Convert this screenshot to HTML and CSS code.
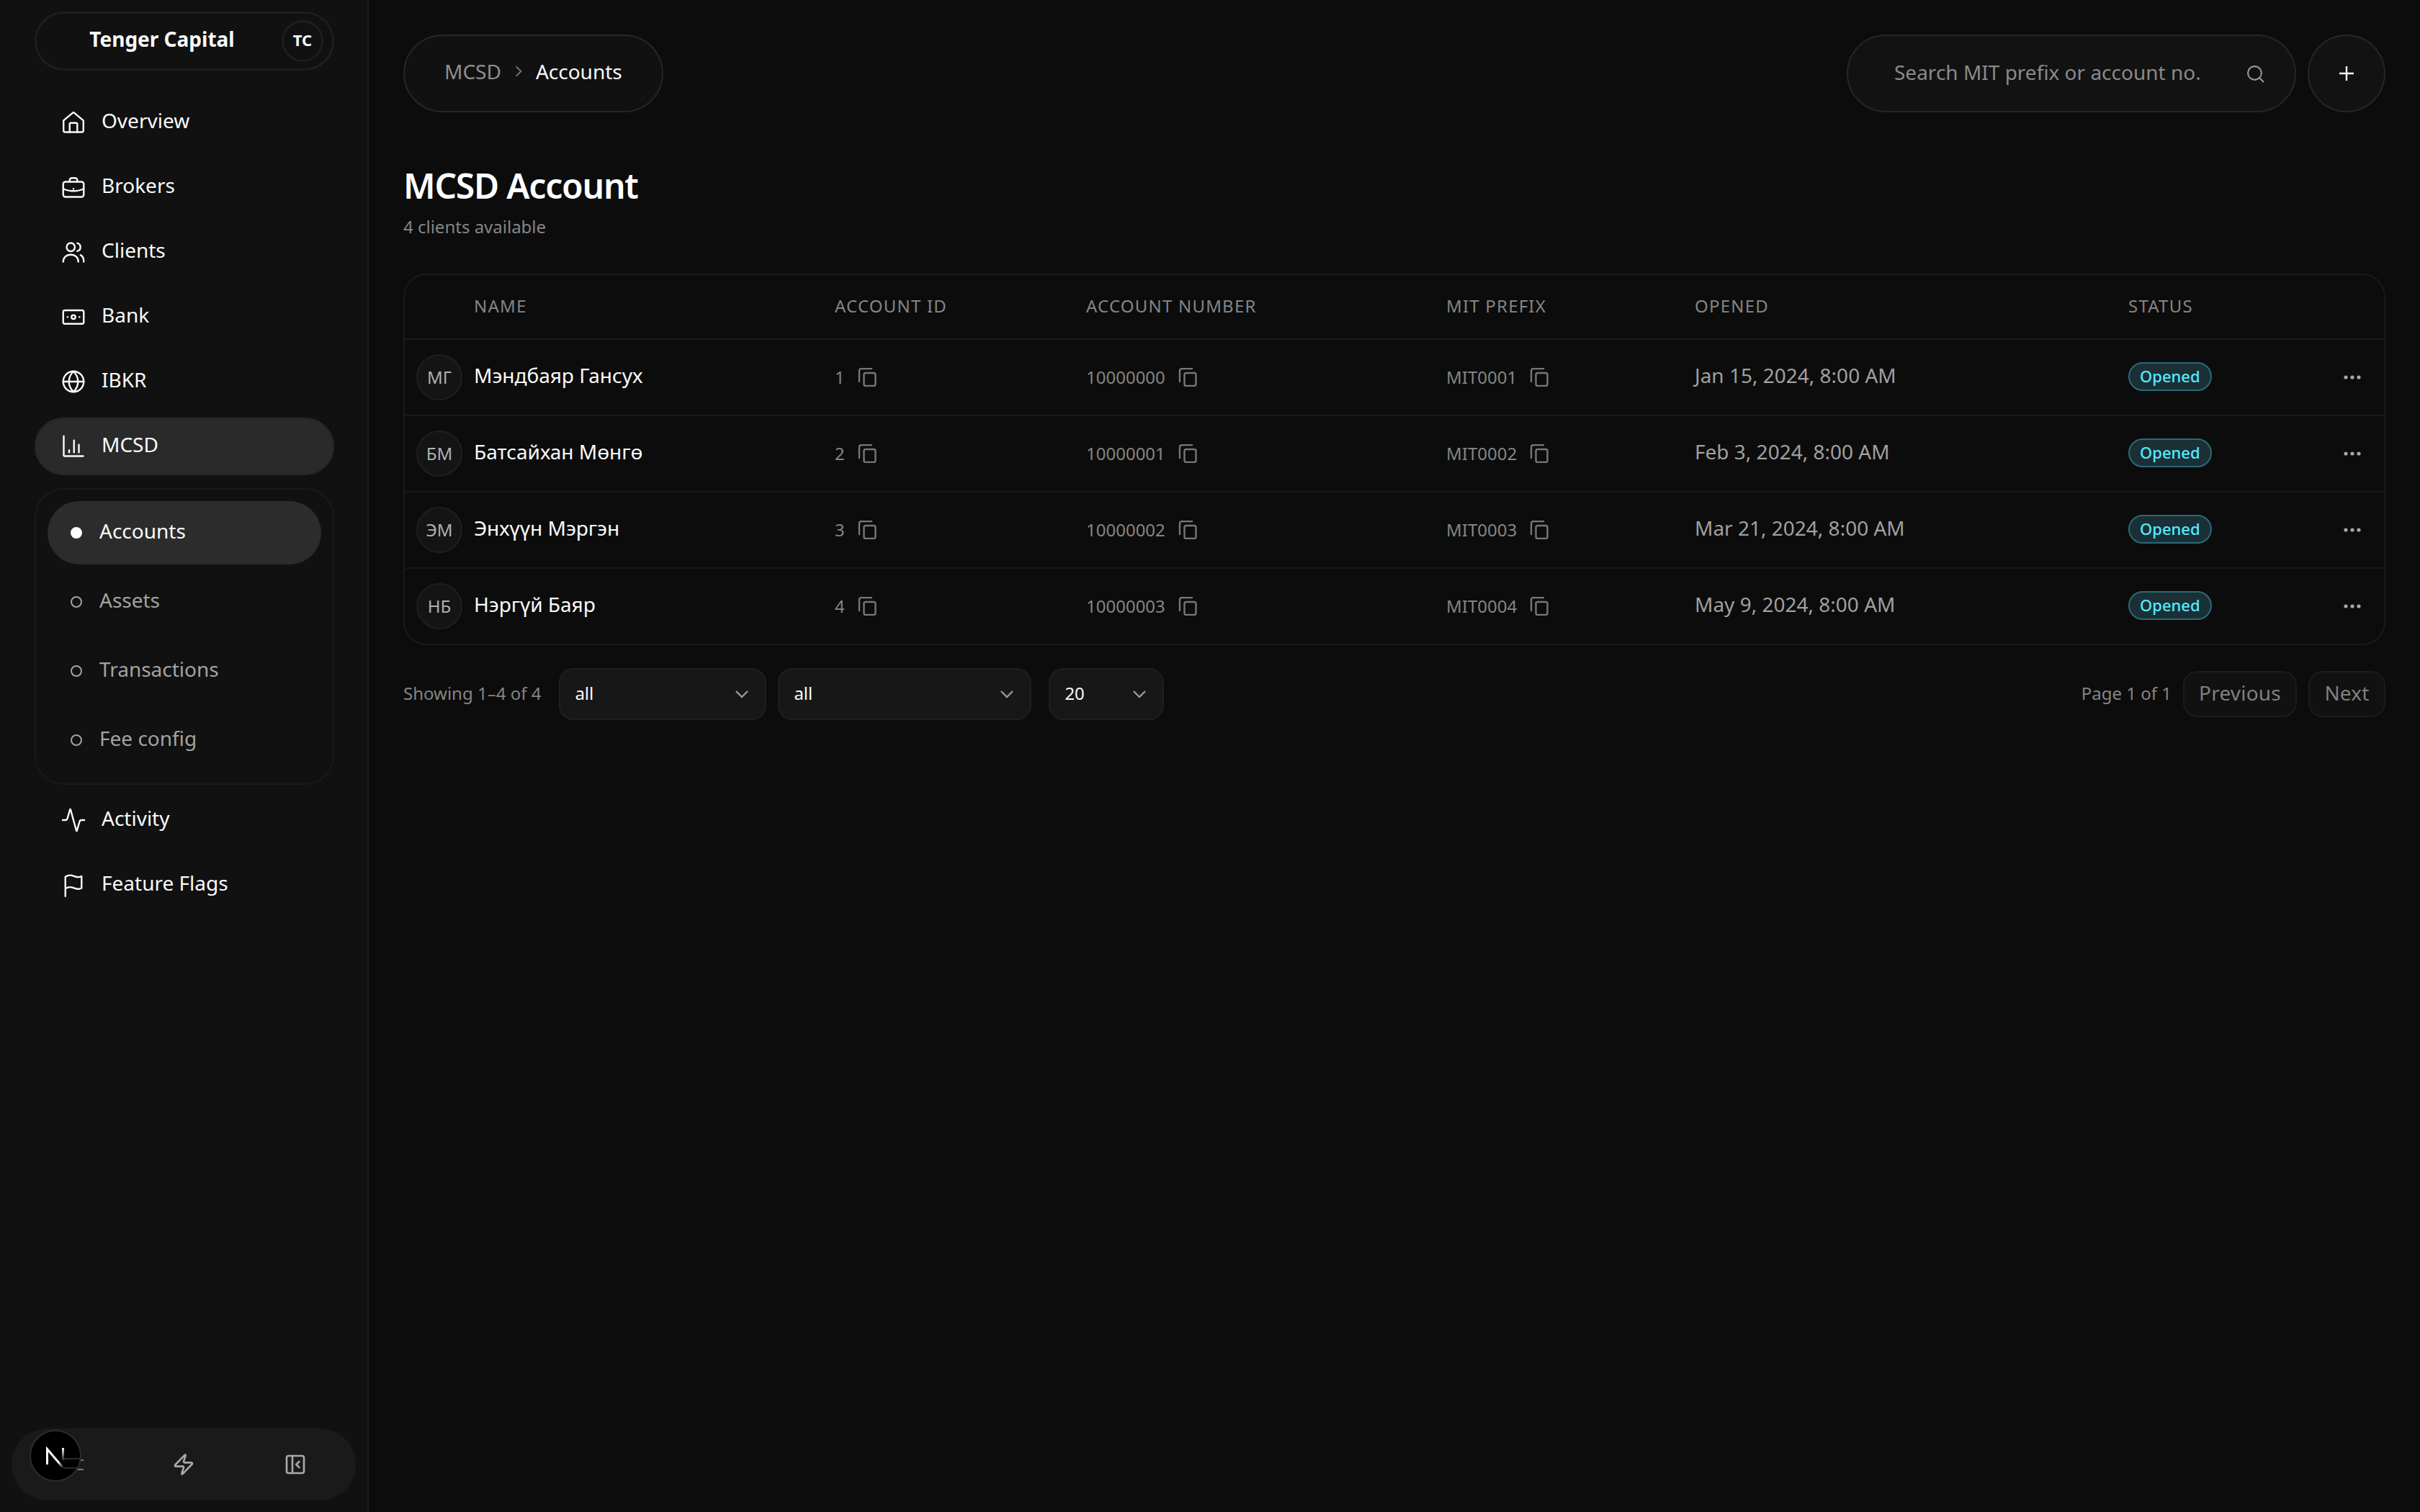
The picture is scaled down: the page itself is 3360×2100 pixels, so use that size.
FILE: index.html
```html
<!DOCTYPE html>
<html lang="en">
<head>
    <meta charset="UTF-8" />
    <title>MCSD Accounts</title>
    <link rel="stylesheet" href="styles.css">
</head>
<body>
<svg class="sprite" width="0" height="0">
    <symbol id="i-copy" viewBox="0 0 26 26"><rect x="8.5" y="7" width="16" height="18" rx="2.5"/><path d="M2 19V4a3 3 0 0 1 3-3h14"/></symbol>
    <symbol id="i-more" viewBox="0 0 26 8"><circle cx="4" cy="4" r="2.6"/><circle cx="13" cy="4" r="2.6"/><circle cx="22" cy="4" r="2.6"/></symbol>
    <symbol id="i-chev" viewBox="0 0 20 12"><path d="M2 2l8 8 8-8"/></symbol>
</svg>
<div class="app">
    <!-- sidebar -->
    <aside class="sidebar">
        <div class="org">
            <span class="org-name">Tenger Capital</span>
            <span class="org-badge">TC</span>
        </div>
        <nav class="nav">
            <a class="nav-item">
                <svg class="nav-icon" viewBox="0 0 24 24"><path d="M2.8 10.2 11.2 3.2a1.3 1.3 0 0 1 1.6 0l8.4 7v9.3a1.5 1.5 0 0 1-1.5 1.5H4.3a1.5 1.5 0 0 1-1.5-1.5z"/><path d="M8.5 21v-7.5a1 1 0 0 1 1-1h5a1 1 0 0 1 1 1V21"/></svg>
                <span>Overview</span>
            </a>
            <a class="nav-item">
                <svg class="nav-icon" viewBox="0 0 24 24"><rect x="2.5" y="7" width="19" height="14" rx="2"/><path d="M8.5 7V5.5a2 2 0 0 1 2-2h3a2 2 0 0 1 2 2V7"/><path d="M2.5 13.5c3 1.5 6 2 9.5 2s6.5-.5 9.5-2"/><path d="M12 13.5v.1"/></svg>
                <span>Brokers</span>
            </a>
            <a class="nav-item">
                <svg class="nav-icon" viewBox="0 0 24 24"><circle cx="9.5" cy="7.5" r="3.8"/><path d="M2.5 21c0-4 3-6.5 7-6.5s7 2.5 7 6.5"/><path d="M15.5 3.8a3.8 3.8 0 0 1 0 7.4"/><path d="M18.5 14.8c1.9.9 3 3 3 6.2"/></svg>
                <span>Clients</span>
            </a>
            <a class="nav-item">
                <svg class="nav-icon" viewBox="0 0 24 24"><rect x="2.5" y="6" width="19" height="12.5" rx="1.5"/><circle cx="12" cy="12.2" r="1.8"/><path d="M6.5 12.2h.1M17.5 12.2h.1"/></svg>
                <span>Bank</span>
            </a>
            <a class="nav-item">
                <svg class="nav-icon" viewBox="0 0 24 24"><circle cx="12" cy="12" r="9.5"/><path d="M2.5 12h19"/><path d="M12 2.5c3 3 4.2 6 4.2 9.5s-1.2 6.5-4.2 9.5c-3-3-4.2-6-4.2-9.5s1.2-6.5 4.2-9.5z"/></svg>
                <span>IBKR</span>
            </a>
            <a class="nav-item is-active">
                <svg class="nav-icon" viewBox="0 0 24 24"><path d="M3 2.5V20a1 1 0 0 0 1 1h17"/><path d="M8 17.5v-2"/><path d="M12.5 17.5V6.5"/><path d="M17 17.5v-7"/></svg>
                <span>MCSD</span>
            </a>
            <div class="subnav">
                <a class="sub-item is-active"><i class="sub-dot"></i><span>Accounts</span></a>
                <a class="sub-item"><i class="sub-dot"></i><span>Assets</span></a>
                <a class="sub-item"><i class="sub-dot"></i><span>Transactions</span></a>
                <a class="sub-item"><i class="sub-dot"></i><span>Fee config</span></a>
            </div>
            <a class="nav-item">
                <svg class="nav-icon" viewBox="0 0 24 24"><path d="M22 12h-2.5a2 2 0 0 0-1.9 1.5l-2.4 8.3a.25.25 0 0 1-.5 0L9.3 2.2a.25.25 0 0 0-.5 0l-2.4 8.3A2 2 0 0 1 4.5 12H2"/></svg>
                <span>Activity</span>
            </a>
            <a class="nav-item">
                <svg class="nav-icon" viewBox="0 0 24 24"><path d="M4.500 22.500V4.500c3-2 5-1.800 7.500-.7s5 1.600 7.500.2v11c-2.500 1.400-5 .9-7.500-.2s-4.500-1.300-7.500.7"/></svg>
                <span>Feature Flags</span>
            </a>
        </nav>
        <div class="dock">
            <div class="dock-cell">
                <svg class="dock-icon dock-menu" viewBox="0 0 36 36"><path d="M0 12h36M0 25h36"/></svg>
                <svg class="next-logo" viewBox="0 0 72 72">
                    <defs>
                        <linearGradient id="next-a" x1="24" y1="25" x2="47" y2="53" gradientUnits="userSpaceOnUse"><stop offset="0" stop-color="#fff"/><stop offset="0.7" stop-color="#fff"/><stop offset="1" stop-color="#fff" stop-opacity="0"/></linearGradient>
                        <linearGradient id="next-b" x1="47" y1="25" x2="47" y2="44" gradientUnits="userSpaceOnUse"><stop offset="0" stop-color="#fff"/><stop offset="1" stop-color="#fff" stop-opacity="0"/></linearGradient>
                    </defs>
                    <circle class="next-disc" cx="36" cy="36" r="35"/>
                    <path class="next-faint" d="M47 40h24M47 53h24"/>
                    <path class="next-n" stroke="url(#next-a)" d="M24.5 48V26.5L47 53"/>
                    <path class="next-n" stroke="url(#next-b)" d="M46.5 25v20"/>
                </svg>
            </div>
            <div class="dock-cell">
                <svg class="dock-icon" viewBox="0 0 24 24"><path d="M4 14a1 1 0 0 1-.78-1.63l9.9-10.2a.5.5 0 0 1 .86.46l-1.92 6.02A1 1 0 0 0 13 10h7a1 1 0 0 1 .78 1.63l-9.9 10.2a.5.5 0 0 1-.86-.46l1.92-6.02A1 1 0 0 0 11 14z"/></svg>
            </div>
            <div class="dock-cell dock-last">
                <svg class="dock-icon" viewBox="0 0 24 24"><rect x="3" y="3" width="18" height="18" rx="2"/><path d="M9 3v18"/><path d="M16 15l-3-3 3-3"/></svg>
            </div>
        </div>
    </aside>

    <!-- main -->
    <main class="main">
        <header class="topbar">
            <div class="crumbs">
                <span class="crumb-muted">MCSD</span>
                <svg class="crumb-sep" viewBox="0 0 10 16"><path d="M2 2l6 6-6 6"/></svg>
                <span>Accounts</span>
            </div>
            <div class="top-actions">
                <div class="search">
                    <span>Search MIT prefix or account no.</span>
                    <svg class="search-icon" viewBox="0 0 24 24"><circle cx="11" cy="11" r="9"/><path d="M18 18l4.5 4.5"/></svg>
                </div>
                <button class="add-btn"><svg viewBox="0 0 22 22"><path d="M11 1v20M1 11h20"/></svg></button>
            </div>
        </header>

        <h1 class="page-title">MCSD Account</h1>
        <p class="page-sub">4 clients available</p>

        <div class="table-wrap">
            <table class="accounts">
                <colgroup>
                    <col class="col-name"><col class="col-id"><col class="col-num"><col class="col-prefix"><col class="col-date"><col class="col-status"><col class="col-more">
                </colgroup>
                <thead>
                    <tr>
                        <th class="th-name">Name</th>
                        <th>Account ID</th>
                        <th>Account number</th>
                        <th>MIT prefix</th>
                        <th>Opened</th>
                        <th>Status</th>
                        <th></th>
                    </tr>
                </thead>
                <tbody>
                    <tr>
                        <td><div class="person"><span class="avatar">МГ</span><span class="person-name">Мэндбаяр Гансух</span></div></td>
                        <td><div class="copy-cell"><span>1</span><svg class="copy-icon"><use href="#i-copy"/></svg></div></td>
                        <td><div class="copy-cell"><span>10000000</span><svg class="copy-icon"><use href="#i-copy"/></svg></div></td>
                        <td><div class="copy-cell"><span>MIT0001</span><svg class="copy-icon"><use href="#i-copy"/></svg></div></td>
                        <td class="date">Jan 15, 2024, 8:00 AM</td>
                        <td><span class="badge">Opened</span></td>
                        <td><svg class="more-icon"><use href="#i-more"/></svg></td>
                    </tr>
                    <tr>
                        <td><div class="person"><span class="avatar">БМ</span><span class="person-name">Батсайхан Мөнгө</span></div></td>
                        <td><div class="copy-cell"><span>2</span><svg class="copy-icon"><use href="#i-copy"/></svg></div></td>
                        <td><div class="copy-cell"><span>10000001</span><svg class="copy-icon"><use href="#i-copy"/></svg></div></td>
                        <td><div class="copy-cell"><span>MIT0002</span><svg class="copy-icon"><use href="#i-copy"/></svg></div></td>
                        <td class="date">Feb 3, 2024, 8:00 AM</td>
                        <td><span class="badge">Opened</span></td>
                        <td><svg class="more-icon"><use href="#i-more"/></svg></td>
                    </tr>
                    <tr>
                        <td><div class="person"><span class="avatar">ЭМ</span><span class="person-name">Энхүүн Мэргэн</span></div></td>
                        <td><div class="copy-cell"><span>3</span><svg class="copy-icon"><use href="#i-copy"/></svg></div></td>
                        <td><div class="copy-cell"><span>10000002</span><svg class="copy-icon"><use href="#i-copy"/></svg></div></td>
                        <td><div class="copy-cell"><span>MIT0003</span><svg class="copy-icon"><use href="#i-copy"/></svg></div></td>
                        <td class="date">Mar 21, 2024, 8:00 AM</td>
                        <td><span class="badge">Opened</span></td>
                        <td><svg class="more-icon"><use href="#i-more"/></svg></td>
                    </tr>
                    <tr>
                        <td><div class="person"><span class="avatar">НБ</span><span class="person-name">Нэргүй Баяр</span></div></td>
                        <td><div class="copy-cell"><span>4</span><svg class="copy-icon"><use href="#i-copy"/></svg></div></td>
                        <td><div class="copy-cell"><span>10000003</span><svg class="copy-icon"><use href="#i-copy"/></svg></div></td>
                        <td><div class="copy-cell"><span>MIT0004</span><svg class="copy-icon"><use href="#i-copy"/></svg></div></td>
                        <td class="date">May 9, 2024, 8:00 AM</td>
                        <td><span class="badge">Opened</span></td>
                        <td><svg class="more-icon"><use href="#i-more"/></svg></td>
                    </tr>
                </tbody>
            </table>
        </div>

        <footer class="pager">
            <div class="pager-left">
                <span class="pager-text">Showing 1–4 of 4</span>
                <div class="select select-a"><span>all</span><svg class="select-chev"><use href="#i-chev"/></svg></div>
                <div class="select select-b"><span>all</span><svg class="select-chev"><use href="#i-chev"/></svg></div>
                <div class="select select-c"><span>20</span><svg class="select-chev"><use href="#i-chev"/></svg></div>
            </div>
            <div class="pager-right">
                <span class="pager-text">Page 1 of 1</span>
                <button class="page-btn btn-prev">Previous</button>
                <button class="page-btn btn-next">Next</button>
            </div>
        </footer>
    </main>
</div>
</body>
</html>
```

FILE: styles.css
```css
* {
    box-sizing: border-box;
}

body {
    margin: 0;
    background: #0c0c0c;
    color: #fafafa;
    font-family: "Noto Sans", sans-serif;
    font-size: 28px;
    overflow: hidden;
}

.sprite {
    position: absolute;
}

.app {
    display: flex;
    width: 3360px;
    height: 2100px;
}

/* sidebar */
.sidebar {
    display: flex;
    flex-direction: column;
    flex: 0 0 512px;
    padding: 16px 46px 16px 48px;
    background: #111;
    border-right: 2px solid #1c1c1c;
}

.org {
    display: flex;
    align-items: center;
    height: 82px;
    padding-right: 12px;
    border: 3px solid #1e1e1e;
    border-radius: 41px;
    margin-bottom: 32px;
}

.org-name {
    flex: 1;
    text-align: center;
    font-weight: 700;
    padding-left: 8px;
    margin-top: -7px;
}

.org-badge {
    display: flex;
    align-items: center;
    justify-content: center;
    width: 58px;
    height: 58px;
    border: 3px solid #1e1e1e;
    border-radius: 50%;
    font-size: 22px;
    font-weight: 700;
    padding-bottom: 4px;
}

.nav {
    display: flex;
    flex-direction: column;
    flex: 1;
    gap: 10px;
}

.nav-item {
    display: flex;
    align-items: center;
    gap: 21px;
    height: 80px;
    padding-left: 36px;
    border-radius: 40px;
}

.nav-item span {
    margin-top: -7px;
}

.nav-item.is-active {
    background: #2a2a2a;
    border: 2px solid #272727;
    padding-left: 34px;
}

.nav-icon {
    width: 36px;
    height: 36px;
    fill: none;
    stroke: #fafafa;
    stroke-width: 1.6;
    stroke-linecap: round;
    stroke-linejoin: round;
}

.subnav {
    display: flex;
    flex-direction: column;
    gap: 8px;
    margin: 8px 0 -1px;
    padding: 16px;
    border: 2px solid #1a1a1a;
    border-radius: 40px;
}

.sub-item {
    display: flex;
    align-items: center;
    gap: 24px;
    height: 88px;
    padding-left: 32px;
    border-radius: 44px;
    color: #a3a3a3;
}

.sub-item span {
    margin-top: -7px;
}

.sub-item.is-active {
    background: #2c2c2c;
    color: #fafafa;
}

.sub-dot {
    width: 16px;
    height: 16px;
    border: 2.5px solid #a3a3a3;
    border-radius: 50%;
}

.is-active .sub-dot {
    background: #fff;
    border-color: #fff;
}

.dock {
    display: grid;
    grid-template-columns: repeat(3, 1fr);
    align-items: center;
    height: 100px;
    margin: 0 -30px 0 -32px;
    background: #1a1a1a;
    border-radius: 50px;
}

.dock-cell {
    position: relative;
    display: flex;
    justify-content: center;
}

.dock-last {
    padding-right: 8px;
}

.dock-icon {
    width: 32px;
    height: 32px;
    fill: none;
    stroke: #a8a8a8;
    stroke-width: 2;
    stroke-linecap: round;
    stroke-linejoin: round;
}

.dock-menu {
    width: 36px;
    height: 36px;
    margin-left: 4px;
    stroke: #777;
}

.next-logo {
    position: absolute;
    left: 25px;
    top: -30px;
    width: 72px;
    height: 72px;
}

.next-disc {
    fill: #000;
    stroke: #2c2c2c;
    stroke-width: 2;
}

.next-faint {
    fill: none;
    stroke: #2a2a2a;
    stroke-width: 2;
}

.next-n {
    fill: none;
    stroke-width: 3;
}

/* main */
.main {
    flex: 1;
    padding: 48px 48px 0;
}

.topbar {
    display: flex;
    justify-content: space-between;
}

.crumbs {
    display: flex;
    align-items: center;
    gap: 18px;
    height: 108px;
    padding: 0 55px 6px 55px;
    background: #111;
    border: 2px solid #262626;
    border-radius: 54px;
}

.crumb-muted {
    color: #8f8f8f;
}

.crumb-sep {
    width: 12px;
    height: 18px;
    fill: none;
    stroke: #777;
    stroke-width: 1.6;
}

.top-actions {
    display: flex;
    gap: 16px;
}

.search {
    display: flex;
    align-items: center;
    justify-content: space-between;
    width: 624px;
    height: 108px;
    padding: 0 42px 0 64px;
    background: #121212;
    border: 2px solid #262626;
    border-radius: 54px;
    color: #8a8a8a;
}

.search span {
    margin-top: -4px;
}

.search-icon {
    width: 25px;
    height: 25px;
    fill: none;
    stroke: #999;
    stroke-width: 2;
    stroke-linecap: round;
}

.add-btn {
    display: flex;
    align-items: center;
    justify-content: center;
    width: 108px;
    height: 108px;
    background: #121212;
    border: 2px solid #262626;
    border-radius: 50%;
    padding: 0;
}

.add-btn svg {
    width: 22px;
    height: 22px;
    fill: none;
    stroke: #fff;
    stroke-width: 2.4;
}

.page-title {
    margin: 70px 0 0;
    font-size: 48px;
    line-height: 64px;
    font-weight: 600;
    letter-spacing: -1.2px;
    color: #fff;
}

.page-sub {
    margin: 9px 0 0;
    font-size: 24px;
    line-height: 32px;
    color: #858585;
}

.table-wrap {
    margin-top: 49px;
    border: 2px solid #1a1a1a;
    border-radius: 32px;
    overflow: hidden;
}

.accounts {
    width: 100%;
    table-layout: fixed;
    border-collapse: separate;
    border-spacing: 0;
}

.col-name { width: 581px; }
.col-id { width: 349px; }
.col-num { width: 500px; }
.col-prefix { width: 345px; }
.col-date { width: 602px; }
.col-status { width: 281px; }

.accounts th {
    height: 90px;
    padding: 0 0 4px 16px;
    text-align: left;
    font-size: 24px;
    font-weight: 400;
    letter-spacing: 1.2px;
    text-transform: uppercase;
    color: #858585;
    border-bottom: 2px solid #181818;
}

.accounts .th-name {
    padding-left: 96px;
}

.accounts td {
    height: 106px;
    padding: 0 0 0 16px;
    font-size: 24px;
    color: #858585;
    border-bottom: 2px solid #181818;
}

.accounts tr:last-child td {
    height: 104px;
    border-bottom: 0;
}

.person {
    display: flex;
    align-items: center;
    gap: 16px;
}

.avatar {
    display: flex;
    align-items: center;
    justify-content: center;
    width: 64px;
    height: 64px;
    background: #141414;
    border: 2px solid #1f1f1f;
    border-radius: 50%;
    font-size: 24px;
    color: #b0b0b0;
    padding-bottom: 2px;
}

.person-name {
    font-size: 28px;
    color: #fafafa;
    margin-top: -7px;
}

.copy-cell {
    display: flex;
    align-items: center;
    gap: 18px;
}

.copy-cell span {
    margin-top: -2px;
}

.copy-icon {
    width: 26px;
    height: 26px;
    fill: none;
    stroke: #777;
    stroke-width: 2.4;
    stroke-linecap: round;
}

.accounts .date {
    font-size: 28px;
    color: #a0a0a0;
    padding-bottom: 6px;
}

.badge {
    display: inline-flex;
    align-items: center;
    height: 40px;
    margin-bottom: 2px;
    padding: 0 14px 2px;
    background: #1a3036;
    border: 2px solid #2a6a75;
    border-radius: 20px;
    font-size: 22px;
    font-weight: 500;
    color: #55eaff;
}

.more-icon {
    display: block;
    width: 26px;
    height: 8px;
    margin-left: 17px;
    fill: #a8a8a8;
}

.pager {
    display: flex;
    align-items: center;
    justify-content: space-between;
    margin-top: 32px;
}

.pager-left,
.pager-right {
    display: flex;
    align-items: center;
    gap: 16px;
}

.pager-text {
    font-size: 24px;
    color: #858585;
    margin-top: -4px;
}

.pager-left .pager-text {
    margin-right: 9px;
}

.select {
    display: flex;
    align-items: center;
    justify-content: space-between;
    height: 72px;
    padding: 0 22px 0 20px;
    background: #171717;
    border: 2px solid #1f1f1f;
    border-radius: 20px;
    font-size: 24px;
    color: #fafafa;
}

.select span {
    margin-top: -4px;
}

.select-a { width: 288px; }
.select-b { width: 352px; }
.select-c { width: 160px; margin-left: 8px; }

.select-chev {
    width: 20px;
    height: 12px;
    fill: none;
    stroke: #999;
    stroke-width: 2.4;
}

.page-btn {
    height: 64px;
    padding: 0 0 4px;
    background: #111;
    border: 2px solid #1c1c1c;
    border-radius: 20px;
    font-family: inherit;
    font-size: 28px;
    letter-spacing: .2px;
    color: #808080;
}

.btn-prev { width: 158px; }
.btn-next { width: 107px; }
```
